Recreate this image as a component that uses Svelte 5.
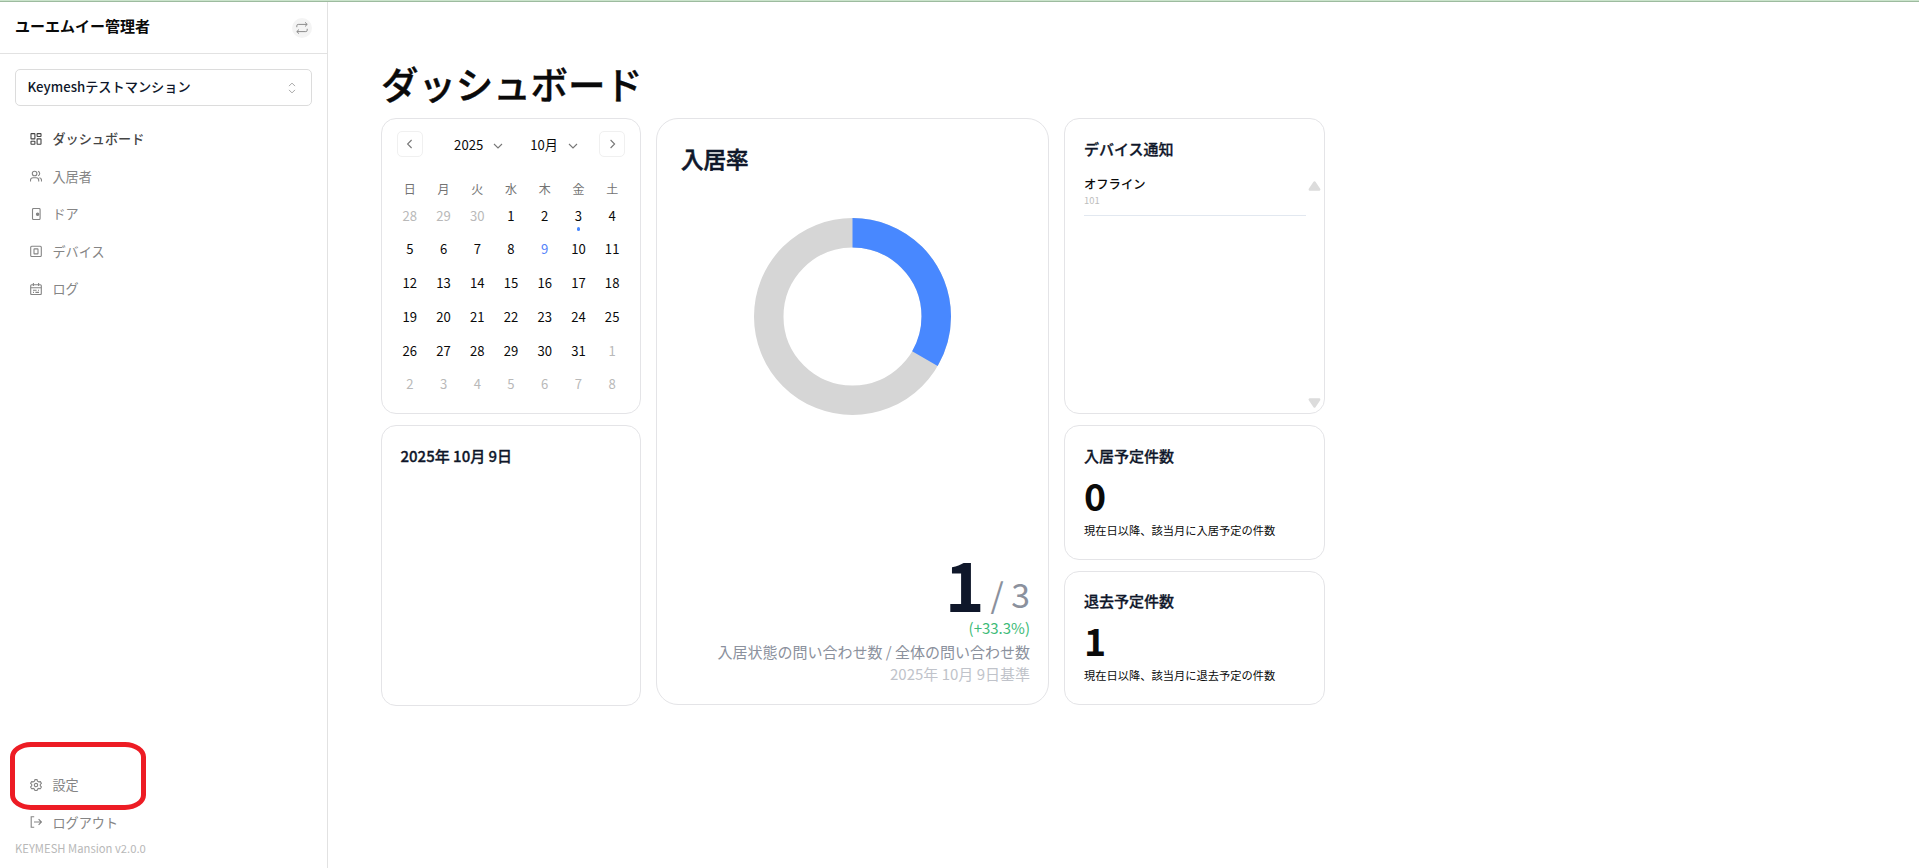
<script>
    const menu = [
        { icon: 'dashboard', label: 'ダッシュボード', active: true },
        { icon: 'users', label: '入居者' },
        { icon: 'door', label: 'ドア' },
        { icon: 'device', label: 'デバイス' },
        { icon: 'log', label: 'ログ' }
    ];
    const footerMenu = [
        { icon: 'settings', label: '設定' },
        { icon: 'logout', label: 'ログアウト' }
    ];
    const weekdays = ['日', '月', '火', '水', '木', '金', '土'];

    const today = 9;
    const events = [3];

    // October 2025 starts on a Wednesday
    const days = [];
    for (let i = 0; i < 42; i++) {
        const date = new Date(2025, 9, i - 2);
        days.push({ day: date.getDate(), current: date.getMonth() === 9 });
    }

    const occupied = 1;
    const total = 3;
    const radius = 83.75;
    const circumference = 2 * Math.PI * radius;
    const filled = circumference * occupied / total;

    const notices = [{ status: 'オフライン', room: '101' }];
    const counts = [
        { title: '入居予定件数', value: 0, note: '現在日以降、該当月に入居予定の件数' },
        { title: '退去予定件数', value: 1, note: '現在日以降、該当月に退去予定の件数' }
    ];
</script>

{#snippet navIcon(name)}
    <svg class="icon" viewBox="0 0 12 12">
        {#if name === 'dashboard'}
            <rect x="1" y="0.6" width="3.9" height="5.3" rx="0.4" />
            <rect x="7.1" y="0.6" width="3.9" height="2.9" rx="0.4" />
            <rect x="1" y="8.2" width="3.9" height="3" rx="0.4" />
            <rect x="7.1" y="5.9" width="3.9" height="5.3" rx="0.4" />
        {:else if name === 'users'}
            <circle cx="4.6" cy="3.5" r="2.3" />
            <path d="M0.5 11.6V10.2a2.5 2.5 0 0 1 2.5-2.5h3.2a2.5 2.5 0 0 1 2.5 2.5v1.4M8 1.2a2.4 2.4 0 0 1 0 4.6M9.4 7.8a2.5 2.5 0 0 1 2.1 2.5v1.3" />
        {:else if name === 'door'}
            <rect x="2.5" y="0.5" width="7.6" height="11" rx="1" />
            <circle class="solid" cx="7.6" cy="6.2" r="1.2" />
        {:else if name === 'device'}
            <rect x="0.7" y="1.2" width="10.6" height="10.3" rx="1" />
            <rect x="4" y="3.9" width="4" height="5" rx="0.4" />
        {:else if name === 'log'}
            <rect x="0.7" y="1.7" width="10.6" height="9.9" rx="1" />
            <path d="M0.7 4.8h10.6M3.4 0.1v3M8.6 0.1v3M3 7.2h3.6M8 7.2h1M3 9.4h1M5.4 9.4h3.6" />
        {:else if name === 'settings'}
            <path d="M5 0.6h2l0.5 1.5 1.3 0.8 1.6-0.3 1 1.7-1.1 1.2v1.3l1.1 1.2-1 1.7-1.6-0.3-1.3 0.8-0.5 1.4h-2l-0.5-1.4-1.3-0.8-1.6 0.3-1-1.7 1.1-1.2v-1.3l-1.1-1.2 1-1.7 1.6 0.3 1.3-0.8z" />
            <circle cx="6" cy="6.1" r="1.7" />
        {:else}
            <path d="M4.2 0.8H1.2v10.4h3M4 6h7.4M8.6 3.2L11.4 6 8.6 8.8" />
        {/if}
    </svg>
{/snippet}

{#snippet navList(items)}
    {#each items as item}
        <a class="nav-item" class:active={item.active} href="#top">
            {@render navIcon(item.icon)}
            <span>{item.label}</span>
        </a>
    {/each}
{/snippet}

<div class="layout">
    <aside>
        <header>
            <strong>ユーエムイー管理者</strong>
            <button class="switch" aria-label="switch">
                <svg viewBox="0 0 12 12">
                    <path d="M0.8 5.2V3.8a1.4 1.4 0 0 1 1.4-1.4h9M9 0.3l2.2 2.1L9 4.5M11.2 6.8v1.4a1.4 1.4 0 0 1-1.4 1.4h-9M3 7.5L0.8 9.6 3 11.7" />
                </svg>
            </button>
        </header>
        <button class="select">
            <span>Keymeshテストマンション</span>
            <svg viewBox="0 0 8 12"><path d="M1 4.1l3-3 3 3M1 7.9l3 3 3-3" /></svg>
        </button>
        <nav>{@render navList(menu)}</nav>
        <div class="bottom">
            {@render navList(footerMenu)}
            <p class="version">KEYMESH Mansion v2.0.0</p>
            <div class="mark"></div>
        </div>
    </aside>

    <main>
        <h1>ダッシュボード</h1>
        <div class="board">
            <div class="col left">
                <section class="card calendar">
                    <div class="cal-head">
                        <button class="step" aria-label="prev"><svg viewBox="0 0 10 10"><path d="M6.6 1L2.6 5l4 4" /></svg></button>
                        <div class="pickers">
                            <span>2025<svg viewBox="0 0 10 10"><path d="M1 3l4 4 4-4" /></svg></span>
                            <span>10月<svg viewBox="0 0 10 10"><path d="M1 3l4 4 4-4" /></svg></span>
                        </div>
                        <button class="step" aria-label="next"><svg viewBox="0 0 10 10"><path d="M3.6 1l4 4-4 4" /></svg></button>
                    </div>
                    <div class="week">
                        {#each weekdays as w}<span>{w}</span>{/each}
                    </div>
                    <div class="days">
                        {#each days as d}
                            <span
                                class:out={!d.current}
                                class:today={d.current && d.day === today}
                                class:event={d.current && events.includes(d.day)}
                            >{d.day}</span>
                        {/each}
                    </div>
                </section>
                <section class="card schedule">
                    <h3>2025年 10月 9日</h3>
                </section>
            </div>

            <section class="card rate">
                <h2>入居率</h2>
                <svg class="donut" viewBox="0 0 197 197">
                    <circle class="track" cx="98.5" cy="98.5" r={radius} />
                    <circle class="value" cx="98.5" cy="98.5" r={radius} stroke-dasharray="{filled} {circumference}" transform="rotate(-90 98.5 98.5)" />
                </svg>
                <div class="summary">
                    <div class="ratio"><b>{occupied}</b><span>/ {total}</span></div>
                    <p class="plus">(+33.3%)</p>
                    <p>入居状態の問い合わせ数 / 全体の問い合わせ数</p>
                    <p class="date">2025年 10月 9日基準</p>
                </div>
            </section>

            <div class="col right">
                <section class="card notice">
                    <h3>デバイス通知</h3>
                    <div class="scroller">
                        <ul>
                            {#each notices as n}
                                <li><b>{n.status}</b><small>{n.room}</small></li>
                            {/each}
                        </ul>
                        <div class="bar">
                            <svg viewBox="0 0 13 10"><path d="M6.5 1.5L11.2 8.5H1.8z" /></svg>
                            <svg viewBox="0 0 13 10"><path d="M6.5 8.5L1.8 1.5h9.4z" /></svg>
                        </div>
                    </div>
                </section>
                {#each counts as c}
                    <section class="card count">
                        <h3>{c.title}</h3>
                        <strong>{c.value}</strong>
                        <p>{c.note}</p>
                    </section>
                {/each}
            </div>
        </div>
    </main>
</div>

<style>
    :global(html) {
        font-size: 15px;
    }
    :global(body) {
        background: #fff;
        font-family: 'Noto Sans CJK JP', sans-serif;
    }
    * {
        box-sizing: border-box;
        margin: 0;
        padding: 0;
    }
    button {
        font: inherit;
        background: none;
        border: none;
    }
    svg {
        display: block;
        fill: none;
        stroke: currentColor;
        flex: none;
    }
    .layout {
        display: flex;
        height: 868px;
        overflow: hidden;
        border-top: 1px solid #cbe4cc;
        box-shadow: inset 0 1px #9dbb9f;
    }
    aside {
        display: flex;
        flex-direction: column;
        width: 328px;
        margin-top: 1px;
        border-right: 1px solid #e2e2e2;
    }
    header {
        display: flex;
        align-items: center;
        justify-content: space-between;
        height: 52px;
        padding: 0 15px;
        border-bottom: 1px solid #e2e2e2;
    }
    header strong {
        font-size: 1rem;
        font-weight: 700;
        line-height: 22px;
        color: #0a0a0a;
        padding-bottom: 3px;
    }
    .switch {
        display: grid;
        place-items: center;
        width: 20px;
        height: 20px;
        border-radius: 50%;
        background: #f4f4f4;
        color: #8c8c8c;
    }
    .switch svg {
        width: 12px;
        height: 12px;
    }
    .select {
        display: flex;
        align-items: center;
        justify-content: space-between;
        height: 37px;
        margin: 15px 15px 14px;
        padding: 0 15px 2px 11.5px;
        border: 1px solid #dcdcdc;
        border-radius: 5px;
        font-size: 0.88rem;
        font-weight: 500;
        color: #0f172a;
    }
    .select svg {
        width: 8px;
        height: 12px;
        margin-top: 2px;
        color: #a8a8a8;
    }
    .nav-item {
        display: flex;
        align-items: center;
        gap: 10.5px;
        height: 37.5px;
        padding-left: 30px;
        font-size: 0.875rem;
        color: #858585;
        text-decoration: none;
    }
    .nav-item.active {
        color: #454545;
        font-weight: 500;
    }
    .icon {
        width: 12px;
        height: 12px;
        stroke-width: 1.1;
    }
    .icon .solid {
        fill: currentColor;
    }
    .bottom {
        position: relative;
        margin-top: auto;
    }
    .version {
        padding-left: 15px;
        margin-bottom: 13px;
        font-size: 0.75rem;
        line-height: 14px;
        color: #b8b8b8;
    }
    .mark {
        position: absolute;
        left: 10px;
        top: -24px;
        width: 136px;
        height: 68px;
        border: 5px solid #ed1c24;
        border-radius: 21px / 15px;
    }
    main {
        padding: 57px 0 0 53px;
    }
    h1 {
        height: 60px;
        font-size: 2.5rem;
        font-weight: 500;
        line-height: 50px;
        letter-spacing: -0.003em;
        color: #0a0a0a;
        -webkit-text-stroke: 0.4px;
    }
    h2,
    h3 {
        font-weight: 500;
        color: #0f172a;
        -webkit-text-stroke: 0.3px;
    }
    h2 {
        font-size: 1.5rem;
        line-height: 28px;
        -webkit-text-stroke-width: 0.6px;
    }
    h3 {
        font-size: 1rem;
        line-height: 22px;
    }
    .board {
        display: flex;
        gap: 15px;
        height: 588px;
    }
    .col {
        display: flex;
        flex-direction: column;
        gap: 11px;
    }
    .left {
        width: 260px;
    }
    .right {
        width: 261px;
    }
    .card {
        border: 1px solid #e4e4e7;
        border-radius: 15px;
    }
    .calendar {
        height: 296px;
        padding: 12px 11px 0 11px;
    }
    .cal-head {
        display: flex;
        justify-content: space-between;
        padding: 0 4px 0 4px;
    }
    .step {
        display: grid;
        place-items: center;
        width: 26px;
        height: 26px;
        border: 1px solid #f0f0f0;
        border-radius: 5px;
        color: #777;
    }
    .step svg,
    .pickers svg {
        width: 10px;
        height: 10px;
        stroke-width: 1.1;
    }
    .pickers {
        display: flex;
        gap: 27px;
        padding: 0 0 0 10px;
        font-size: 0.875rem;
        color: #0a0a0a;
    }
    .pickers span {
        display: flex;
        align-items: center;
        gap: 10px;
    }
    .pickers svg {
        margin-top: 3px;
        color: #777;
    }
    .week,
    .days {
        display: grid;
        grid-template-columns: repeat(7, 1fr);
        text-align: center;
    }
    .week {
        margin-top: 23px;
        font-size: 0.8rem;
        line-height: 18px;
        color: #737373;
    }
    .days {
        grid-template-rows: 33px repeat(3, 34px) 33px 33px;
        margin-top: 1px;
        font-size: 0.875rem;
        line-height: 33px;
        color: #0a0a0a;
    }
    .days span {
        position: relative;
    }
    .days .out {
        color: #b9b9b9;
    }
    .days .today {
        color: #5583fa;
    }
    .event::after {
        content: '';
        position: absolute;
        left: calc(50% - 1.5px);
        top: 28px;
        width: 3px;
        height: 4px;
        border-radius: 1.5px;
        background: #4888ff;
    }
    .schedule {
        height: 281px;
        padding: 19px 18.5px;
    }
    .rate {
        display: flex;
        flex-direction: column;
        width: 393px;
        height: 587px;
        padding: 25px 18px 18.5px 24px;
        border-radius: 22px;
    }
    .donut {
        width: 197px;
        height: 197px;
        margin: 46px 0 0 73px;
        stroke-width: 29.5;
    }
    .track {
        stroke: #d6d6d6;
    }
    .value {
        stroke: #4888ff;
    }
    .summary {
        margin-top: auto;
        text-align: right;
        font-size: 1rem;
        line-height: 22.5px;
        color: #8b919d;
    }
    .ratio {
        display: flex;
        justify-content: flex-end;
        align-items: flex-end;
        gap: 6px;
    }
    .ratio b {
        font-size: 4.5rem;
        line-height: 68px;
        color: #0f172a;
    }
    .ratio span {
        font-size: 2.25rem;
        line-height: 47px;
    }
    .plus {
        margin-bottom: 1px;
        color: #3dbb78;
    }
    .date {
        color: #c0c3ca;
    }
    .notice {
        display: flex;
        flex-direction: column;
        height: 296px;
        padding: 19px 3px 5px 19px;
    }
    .scroller {
        display: flex;
        justify-content: space-between;
        flex: 1;
        padding-top: 14px;
    }
    ul {
        width: 222px;
        list-style: none;
    }
    li {
        display: flex;
        flex-direction: column;
        padding-bottom: 8px;
        border-bottom: 1px solid #e2e8f0;
    }
    li b {
        font-size: 0.82rem;
        font-weight: 500;
        line-height: 20px;
        color: #0a0a0a;
    }
    li small {
        font-size: 0.625rem;
        line-height: 13px;
        color: #bdbdbd;
    }
    .bar {
        display: flex;
        flex-direction: column;
        justify-content: space-between;
        padding-top: 7px;
    }
    .bar svg {
        width: 13px;
        height: 10px;
        fill: #dcdcdc;
        stroke: #dcdcdc;
        stroke-width: 2.4;
        stroke-linejoin: round;
    }
    .count {
        height: 134.5px;
        padding: 18.5px 19px;
    }
    .count strong {
        display: block;
        font-size: 2.5rem;
        font-weight: 600;
        line-height: 56px;
        color: #0a0a0a;
    }
    .count p {
        font-size: 0.75rem;
        line-height: 16px;
        margin-top: -1px;
        color: #0a0a0a;
    }
</style>
